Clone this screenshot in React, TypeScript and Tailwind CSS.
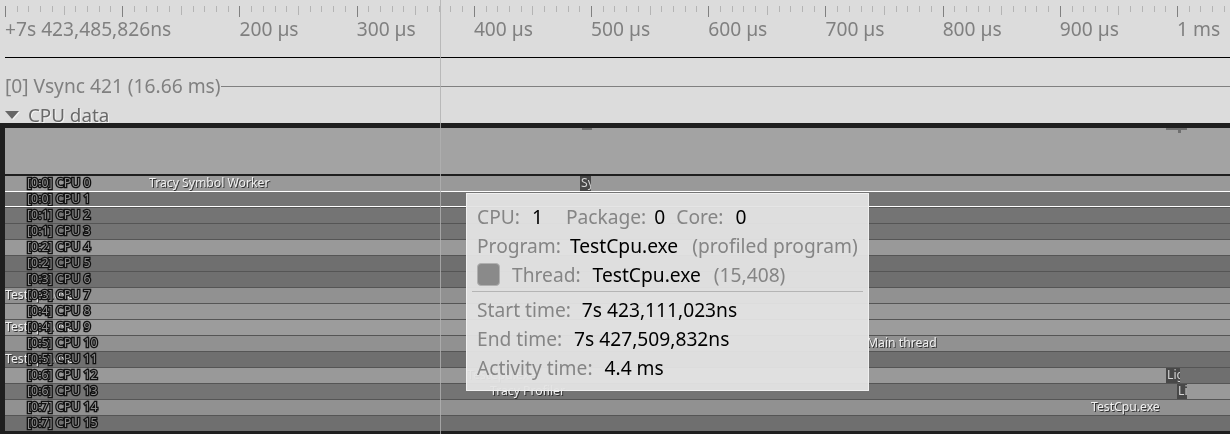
import React from 'react';

type Seg = { w?: number; bg: string; text?: string; pad?: number; block?: boolean };

const light = 'bg-[#999999]';
const dark = 'bg-[#747474]';
const darker = 'bg-[#6f6f6f]';
const mid = 'bg-[#919191]';
const pale = 'bg-[#9c9c9c]';
const block = 'bg-[#484848]';

const rows: { label: string; segs: Seg[] }[] = [
  { label: '[0:0] CPU 0', segs: [{ w: 575, bg: light, text: 'Tracy Symbol Worker', pad: 144 }, { w: 11, bg: block, text: 'Sy', pad: 1, block: true }, { bg: light }] },
  { label: '[0:0] CPU 1', segs: [{ bg: dark }] },
  { label: '[0:1] CPU 2', segs: [{ bg: dark }] },
  { label: '[0:1] CPU 3', segs: [{ bg: dark }] },
  { label: '[0:2] CPU 4', segs: [{ bg: light }] },
  { label: '[0:2] CPU 5', segs: [{ bg: darker }] },
  { label: '[0:3] CPU 6', segs: [{ bg: darker }] },
  { label: '[0:3] CPU 7', segs: [{ bg: mid, text: 'TestCpu.exe', pad: 0 }] },
  { label: '[0:4] CPU 8', segs: [{ bg: light }] },
  { label: '[0:4] CPU 9', segs: [{ bg: pale, text: 'TestCpu.exe', pad: 0 }] },
  { label: '[0:5] CPU 10', segs: [{ bg: mid, text: 'Main thread', pad: 862 }] },
  { label: '[0:5] CPU 11', segs: [{ bg: darker, text: 'TestCpu.exe', pad: 0 }] },
  { label: '[0:6] CPU 12', segs: [{ w: 1161, bg: light, text: 'TestCpu.exe', pad: 462 }, { w: 14, bg: block, text: 'Lig', pad: 1, block: true }, { bg: darker }] },
  { label: '[0:6] CPU 13', segs: [{ w: 1172, bg: dark, text: 'Tracy Profiler', pad: 485 }, { w: 10, bg: block, text: 'Li', pad: 1, block: true }, { bg: light }] },
  { label: '[0:7] CPU 14', segs: [{ bg: mid, text: 'TestCpu.exe', pad: 1086 }] },
  { label: '[0:7] CPU 15', segs: [{ bg: darker }] },
];

const ticks = Array.from({ length: 106 }, (_, i) => i);
const marks = ['200 µs', '300 µs', '400 µs', '500 µs', '600 µs', '700 µs', '800 µs', '900 µs', '1 ms'];

const Ruler: React.FC = () => (
  <div className="h-[57px] flex flex-col">
    <svg width="1230" height="17" className="block shrink-0">
      {ticks.map((i) => {
        const x = Math.round(5 + i * 11.72) + 0.5;
        const h = i % 10 === 0 ? 11 : i % 5 === 0 ? 9 : 6;
        return <line key={i} x1={x} x2={x} y1={6} y2={6 + h} stroke={i % 10 === 0 ? '#808080' : '#b4b4b4'} />;
      })}
    </svg>
    <div className="flex text-[19.2px] leading-[24px] text-[#808080] pl-[5px]">
      <span className="w-[234.5px] shrink-0">+7s 423,485,826ns</span>
      {marks.map((m) => (
        <span key={m} className="w-[117.2px] shrink-0 whitespace-nowrap">{m}</span>
      ))}
    </div>
  </div>
);

const Segment: React.FC<{ seg: Seg }> = ({ seg }) => (
  <div
    className={`h-full overflow-hidden whitespace-nowrap text-[12.2px] leading-[15px] ${seg.block ? 'text-[#d4d4d4]' : 'text-[#f0f0f0] [text-shadow:1px_1px_0_#333333]'} ${seg.bg} ${seg.w ? 'shrink-0' : 'flex-1'}`}
    style={{ width: seg.w, paddingLeft: seg.pad }}
  >
    <span className="relative top-[-1px]">{seg.text}</span>
  </div>
);

const Dim: React.FC<{ children: React.ReactNode }> = ({ children }) => <span className="text-[#858585]">{children}</span>;

const Tooltip: React.FC = () => (
  <div className="absolute left-[466px] top-[193px] w-[403px] h-[198px] bg-[#e4e4e4]/95 border border-[#f0f0f0] px-[10px] pt-[8px] text-[19.2px] leading-[29px] text-black whitespace-pre">
    <div className="flex">
      <Dim>CPU:</Dim>
      <span className="ml-[12px] w-[34px]">1</span>
      <Dim>Package:</Dim>
      <span className="ml-[8px] w-[22px]">0</span>
      <Dim>Core:</Dim>
      <span className="ml-[12px]">0</span>
    </div>
    <div className="flex">
      <Dim>Program:</Dim>
      <span className="ml-[9px]">TestCpu.exe</span>
      <span className="ml-[14px]"><Dim>(profiled program)</Dim></span>
    </div>
    <div className="flex items-center">
      <div className="w-[23px] h-[23px] rounded-[4px] bg-[#8a8a8a] border border-[#b0b0b0] mr-[12px]" />
      <Dim>Thread:</Dim>
      <span className="ml-[12px]">TestCpu.exe</span>
      <span className="ml-[13px]"><Dim>(15,408)</Dim></span>
    </div>
    <div className="h-px bg-[#b4b4b4] -mx-[5px] mt-[2px] mb-[3px]" />
    <div className="flex">
      <Dim>Start time:</Dim>
      <span className="ml-[11px]">7s 423,111,023ns</span>
    </div>
    <div className="flex">
      <Dim>End time:</Dim>
      <span className="ml-[12px]">7s 427,509,832ns</span>
    </div>
    <div className="flex">
      <Dim>Activity time:</Dim>
      <span className="ml-[12px]">4.4 ms</span>
    </div>
  </div>
);

const App: React.FC = () => {
  return (
    <div className="relative w-[1230px] h-[434px] overflow-hidden bg-[#dcdcdc] will-change-transform font-['Noto_Sans',sans-serif]">
      <Ruler />
      <div className="h-px bg-black ml-[5px]" />

      <div className="flex items-center h-[24px] mt-[16px] pl-[5px] text-[19.2px] text-[#808080]">
        <span className="whitespace-nowrap">[0] Vsync 421 (16.66 ms)</span>
        <div className="flex-1 h-px bg-[#808080]" />
      </div>

      <div className="flex items-center h-[24px] mt-[5px] pl-[5px] text-[18.8px] text-[#696969] [text-shadow:1px_1px_0_#f4f4f4]">
        <svg width="15" height="10" className="mr-[8px]">
          <path d="M1 2H15L8 10Z" fill="#f4f4f4" />
          <path d="M0 1H14L7 9Z" fill="#666666" />
        </svg>
        <span>CPU data</span>
      </div>

      {/* CPU data panel */}
      <div className="absolute left-0 right-0 top-[123px] bottom-0 bg-[#1f1f1f] pl-[5px] pt-[5px]">
        <div className="relative h-[46px] bg-[#a3a3a3]">
          <div className="absolute left-[577px] top-0 w-[10px] h-[2px] bg-[#6f6f6f]" />
          <div className="absolute left-[1161px] top-0 w-[21px] h-[2px] bg-[#6f6f6f]" />
          <div className="absolute left-[1173px] top-0 w-[3px] h-[5px] bg-[#6f6f6f]" />
        </div>
        <div className="h-[2px]" />
        <div className="bg-[#555555]">
          {rows.map((r) => (
            <div key={r.label} className="relative flex h-[15px] mb-px">
              {r.segs.map((s, i) => <Segment key={i} seg={s} />)}
              <span className="absolute left-[22px] top-[-1px] text-[12.4px] leading-[16px] whitespace-nowrap text-[#8c8c8c] [-webkit-text-stroke:2.6px_#111111] [paint-order:stroke_fill]">{r.label}</span>
            </div>
          ))}
        </div>
      </div>

      {/* hovered CPU row outline */}
      <div className="absolute left-[5px] right-0 top-[191px] h-[16px] border-y border-white" />
      {/* time cursor */}
      <div className="absolute left-[440px] top-0 bottom-0 w-px bg-[#b0b0b0]/80" />
      <Tooltip />
    </div>
  );
};

export default App;
